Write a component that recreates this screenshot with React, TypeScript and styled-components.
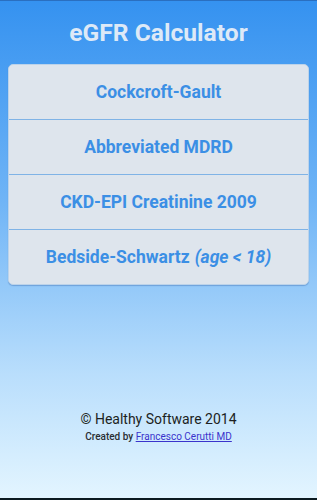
import React from "react";
import styled, { createGlobalStyle } from "styled-components";

const Global = createGlobalStyle`
  html, body { margin: 0; padding: 0; height: 100%; }
  body { font-family: Roboto, "Noto Sans", sans-serif; }
  #root { height: 100%; }
`;

const Screen = styled.div`
  box-sizing: border-box;
  width: 317px;
  height: 500px;
  display: flex;
  flex-direction: column;
  background: linear-gradient(to bottom, #3592f0 0%, #6fb4f6 40%, #b9defc 75%, #e3f5ff 100%);
  border-top: 1px solid #2a6fc0;
  border-bottom: 2px solid #0c1a20;
`;

const Title = styled.h1`
  margin: 0;
  padding: 18px 0 0;
  height: 46px;
  box-sizing: border-box;
  text-align: center;
  font-size: 24.6px;
  font-weight: 700;
  color: #dde9f7;
  line-height: 28px;
`;

const Card = styled.div`
  margin: 17px 8px 0;
  background: #dee5ed;
  border: 1px solid #bcd3ea;
  border-radius: 5px;
  box-shadow: 0 1px 1px rgba(40, 90, 160, 0.35);
  display: flex;
  flex-direction: column;
`;

const Row = styled.button<{ $last?: boolean }>`
  all: unset;
  height: 54px;
  display: flex;
  align-items: center;
  justify-content: center;
  font-family: Roboto, sans-serif;
  font-size: 17.5px;
  font-weight: 700;
  color: #3b8fe5;
  border-bottom: ${(p) => (p.$last ? "none" : "1px solid #7fb3e6")};
  cursor: pointer;
`;

const Em = styled.i`
  font-style: italic;
  margin-left: 5px;
`;

const Spacer = styled.div`
  flex: 1;
`;

const Footer = styled.div`
  display: flex;
  flex-direction: column;
  align-items: center;
  padding-bottom: 55px;
  color: #1c1f22;
`;

const Copy = styled.div`
  font-size: 14px;
  line-height: 18px;
`;

const Credit = styled.div`
  font-size: 10px;
  font-weight: 500;
  margin-top: 3px;
  line-height: 12px;
  color: #2a2e33;
`;

const Link = styled.a`
  color: #3a33cc;
  font-weight: 400;
  text-decoration: underline;
`;

export default function App() {
  return (
    <>
      <Global />
      <Screen>
        <Title>eGFR Calculator</Title>
        <Card>
          <Row>Cockcroft-Gault</Row>
          <Row>Abbreviated MDRD</Row>
          <Row>CKD-EPI Creatinine 2009</Row>
          <Row $last>
            Bedside-Schwartz<Em>(age &lt; 18)</Em>
          </Row>
        </Card>
        <Spacer />
        <Footer>
          <Copy>© Healthy Software 2014</Copy>
          <Credit>
            Created by <Link href="#">Francesco Cerutti MD</Link>
          </Credit>
        </Footer>
      </Screen>
    </>
  );
}
